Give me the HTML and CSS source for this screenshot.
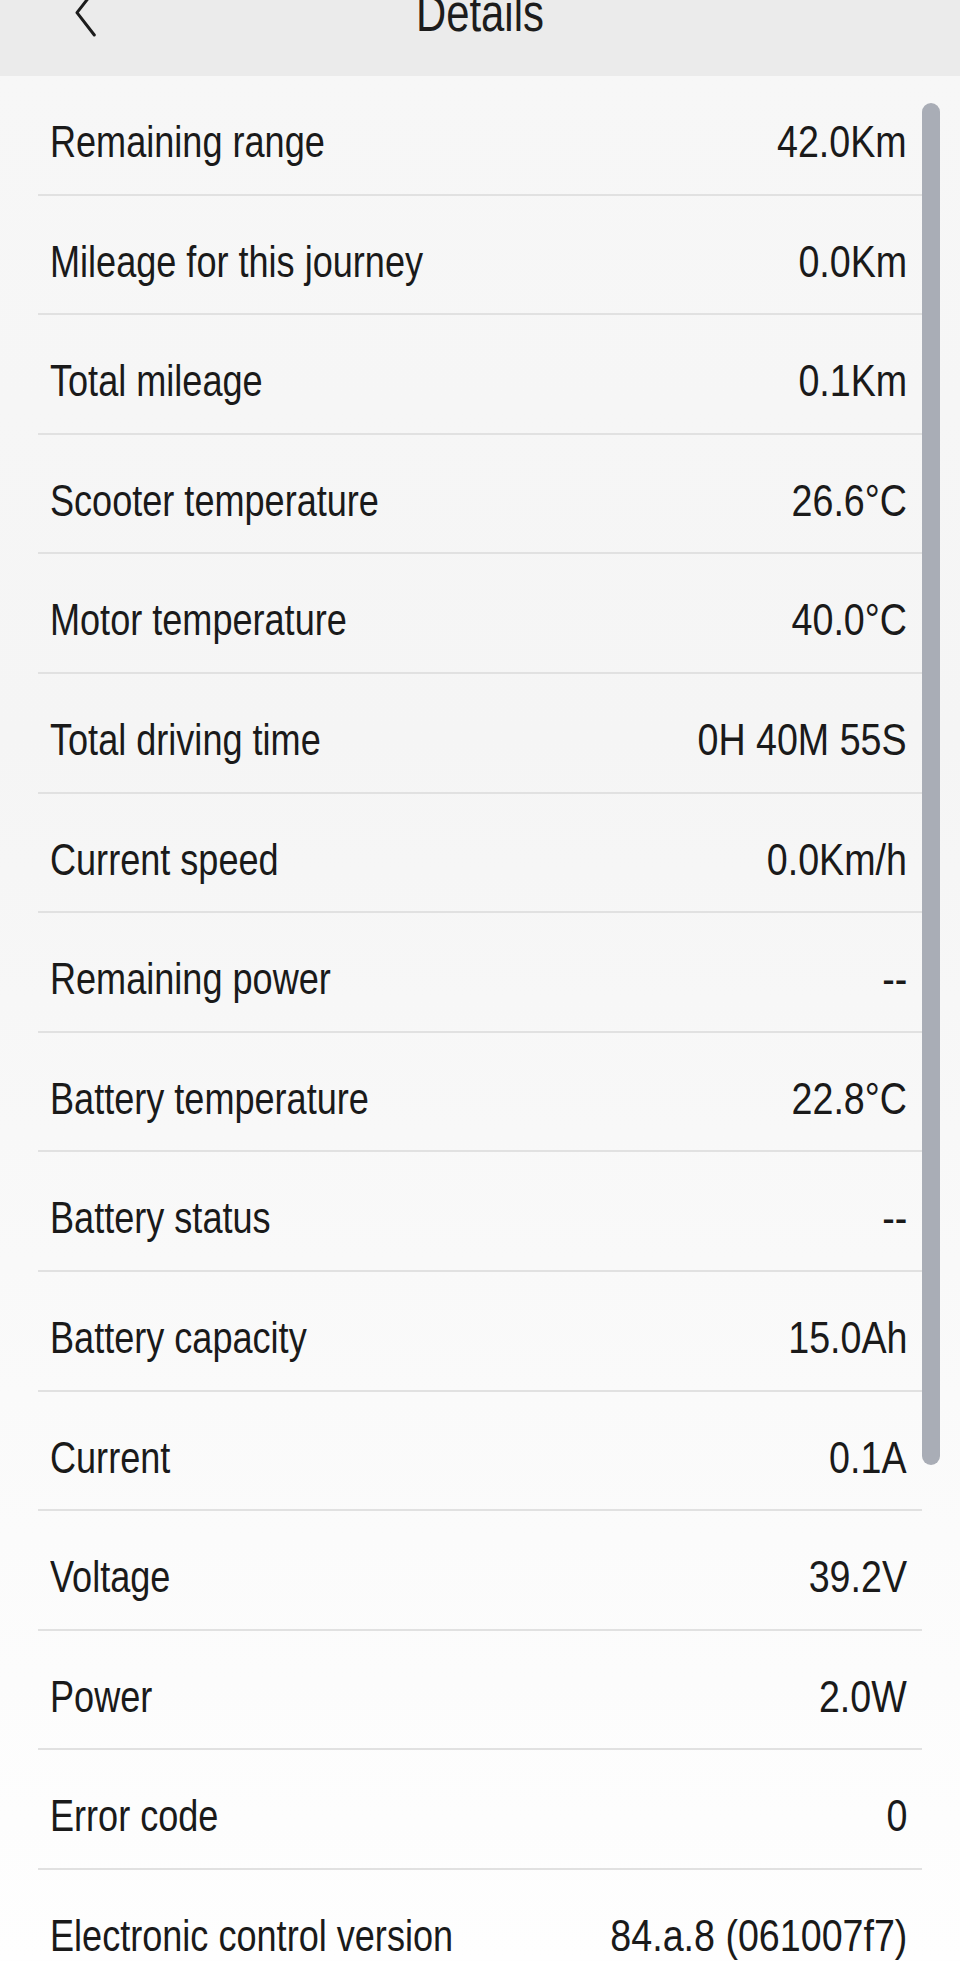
FILE: index.html
```html
<!DOCTYPE html>
<html lang="en">
<head>
<meta charset="utf-8">
<title>Details</title>
<link rel="stylesheet" href="styles.css">
</head>
<body>
<div class="screen">
  <header class="nav">
    <button class="back" aria-label="Back">
      <svg width="30" height="60" viewBox="0 0 30 60"><polyline points="23.3,5.4 6,27.7 23.3,50" fill="none" stroke="#1c1c1c" stroke-width="3" stroke-linecap="round" stroke-linejoin="round"/></svg>
    </button>
    <h1 class="title">Details</h1>
    <span></span>
  </header>
  <main class="content">
    <ul class="list">
      <li class="row"><span class="label">Remaining range</span><span class="value">42.0Km</span></li>
      <li class="row"><span class="label">Mileage for this journey</span><span class="value">0.0Km</span></li>
      <li class="row"><span class="label">Total mileage</span><span class="value">0.1Km</span></li>
      <li class="row"><span class="label">Scooter temperature</span><span class="value">26.6°C</span></li>
      <li class="row"><span class="label">Motor temperature</span><span class="value">40.0°C</span></li>
      <li class="row"><span class="label">Total driving time</span><span class="value">0H 40M 55S</span></li>
      <li class="row"><span class="label">Current speed</span><span class="value">0.0Km/h</span></li>
      <li class="row"><span class="label">Remaining power</span><span class="value">--</span></li>
      <li class="row"><span class="label">Battery temperature</span><span class="value">22.8°C</span></li>
      <li class="row"><span class="label">Battery status</span><span class="value">--</span></li>
      <li class="row"><span class="label">Battery capacity</span><span class="value">15.0Ah</span></li>
      <li class="row"><span class="label">Current</span><span class="value">0.1A</span></li>
      <li class="row"><span class="label">Voltage</span><span class="value">39.2V</span></li>
      <li class="row"><span class="label">Power</span><span class="value">2.0W</span></li>
      <li class="row"><span class="label">Error code</span><span class="value">0</span></li>
      <li class="row"><span class="label">Electronic control version</span><span class="value">84.a.8 (061007f7)</span></li>
    </ul>
    <div class="scrollbar"></div>
  </main>
</div>
</body>
</html>
```
FILE: styles.css
```css
html, body {
  margin: 0;
  padding: 0;
}
body {
  width: 960px;
  height: 1961px;
  overflow: hidden;
  font-family: "Liberation Sans", Arial, sans-serif;
  color: #1a1a1a;
  background: #f7f7f7;
}
.screen {
  display: flex;
  flex-direction: column;
  height: 1961px;
}
.nav {
  display: grid;
  grid-template-columns: 1fr auto 1fr;
  align-items: start;
  height: 76px;
  background: #ebebeb;
  overflow: hidden;
  flex: none;
}
.back {
  justify-self: start;
  margin: -15px 0 0 71px;
  padding: 0;
  border: 0;
  background: none;
  width: 30px;
  height: 60px;
}
.back svg {
  display: block;
}
.title {
  margin: -15px 0 0 0;
  font-size: 51px;
  line-height: 58px;
  font-weight: 400;
  color: #1c1c1c;
  transform: scaleX(0.82);
  transform-origin: center;
}
.content {
  position: relative;
  flex: 1;
  background: linear-gradient(to bottom, #f7f7f7 0%, #f5f5f5 35%, #fafafa 70%, #fefefe 100%);
  overflow: hidden;
}
.list {
  list-style: none;
  margin: 0 38px;
  padding: 0;
}
.row {
  box-sizing: border-box;
  height: 119.6px;
  display: flex;
  justify-content: space-between;
  align-items: flex-start;
  padding: 41px 15px 0 12px;
  border-bottom: 2px solid #e1e1e1;
  font-size: 44px;
  line-height: 50px;
  white-space: nowrap;
}
.row:last-child {
  border-bottom: 0;
}
.label {
  display: inline-block;
  transform: scaleX(0.82);
  transform-origin: left center;
}
.value {
  display: inline-block;
  text-align: right;
  transform: scaleX(0.855);
  transform-origin: right center;
}
.scrollbar {
  position: absolute;
  left: 922px;
  top: 27px;
  width: 18px;
  height: 1362px;
  border-radius: 9px;
  background: #a9adb6;
}
```
